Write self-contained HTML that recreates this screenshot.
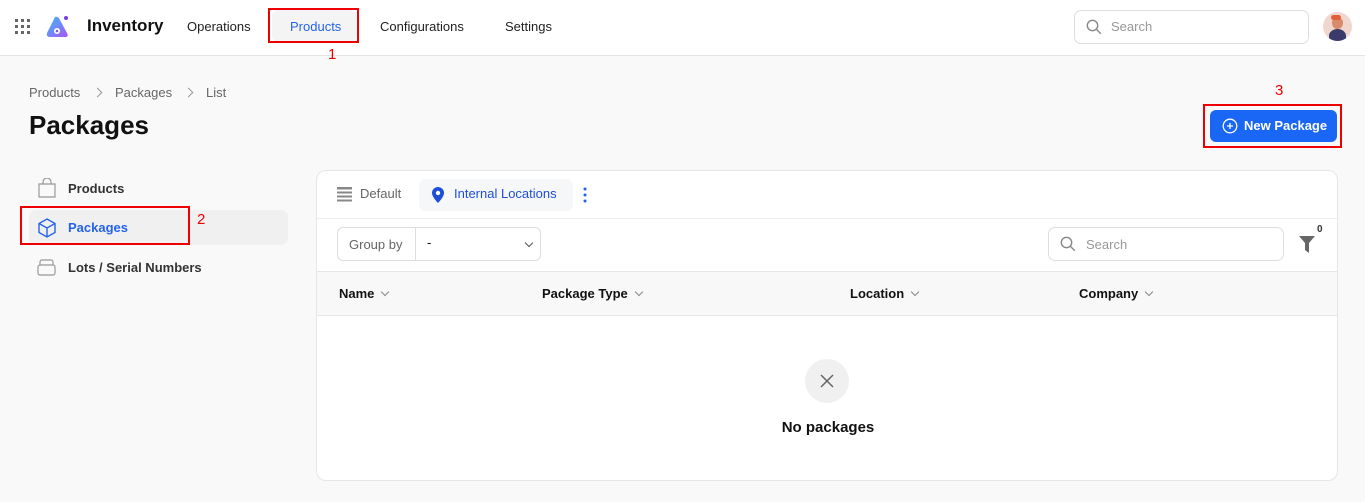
<!DOCTYPE html>
<html><head><meta charset="utf-8"><style>
*{box-sizing:border-box;margin:0;padding:0}
body{width:1365px;height:502px;overflow:hidden;background:#f9f9f9;font-family:"Liberation Sans",sans-serif;color:#111;position:relative}
.abs{position:absolute}
.hdr{left:0;top:0;width:1365px;height:56px;background:#fff;border-bottom:1px solid #e4e4e4}
.nav{font-size:13px;color:#222;top:19px}
.red{border:2px solid #e00;position:absolute}
.rn{color:#e00;font-size:15px;position:absolute}
.card{left:316px;top:170px;width:1022px;height:311px;background:#fff;border:1px solid #e6e6e6;border-radius:10px;overflow:hidden}
.th{font-size:13px;font-weight:bold;top:115px}
.chev{display:inline-block;width:6px;height:6px;border-right:1.2px solid #888;border-bottom:1.2px solid #888;transform:rotate(45deg);margin-left:8px;position:relative;top:-3px}
.bc{top:85px;font-size:13px;color:#666}
.bch{position:absolute;width:7px;height:7px;border-right:1.3px solid #999;border-top:1.3px solid #999;transform:rotate(45deg)}
</style></head><body>
<div class="abs hdr"></div>
<svg class="abs" style="left:15px;top:19px" width="16" height="16"><g fill="#666"><rect x="0" y="0" width="3" height="3"/><rect x="6" y="0" width="3" height="3"/><rect x="12" y="0" width="3" height="3"/><rect x="0" y="6" width="3" height="3"/><rect x="6" y="6" width="3" height="3"/><rect x="12" y="6" width="3" height="3"/><rect x="0" y="12" width="3" height="3"/><rect x="6" y="12" width="3" height="3"/><rect x="12" y="12" width="3" height="3"/></g></svg>
<svg class="abs" style="left:45px;top:14px" width="26" height="26" viewBox="0 0 26 26"><defs><linearGradient id="g" x1="0" y1="0" x2="1" y2="1"><stop offset="0" stop-color="#38bdf8"/><stop offset="1" stop-color="#a855f7"/></linearGradient></defs><path d="M10 3 L2 19 Q1 23 5 23 L20 23 Q24 23 22 19 L15 6 Q13 2 10 3Z" fill="url(#g)"/><circle cx="12" cy="17" r="3" fill="#fff"/><circle cx="12" cy="17" r="1.3" fill="#6d5ce7"/><circle cx="21" cy="4" r="2" fill="#7c3aed"/></svg>
<div class="abs" style="left:87px;top:16px;font-size:17px;font-weight:bold">Inventory</div>
<div class="abs nav" style="left:187px">Operations</div>
<div class="abs" style="left:272px;top:10px;width:84px;height:32px;background:#f4f4f4;border-radius:6px"></div>
<div class="abs nav" style="left:290px;color:#2563eb">Products</div>
<div class="red" style="left:268px;top:8px;width:91px;height:35px"></div>
<div class="rn" style="left:328px;top:46px">1</div>
<div class="abs nav" style="left:380px">Configurations</div>
<div class="abs nav" style="left:505px">Settings</div>
<div class="abs" style="left:1074px;top:10px;width:235px;height:34px;border:1px solid #ddd;border-radius:7px;background:#fff"></div>
<svg class="abs" style="left:1086px;top:19px" width="16" height="16" fill="none" stroke="#888" stroke-width="1.4"><circle cx="6.5" cy="6.5" r="5.2"/><path d="M10.3 10.3l4.5 4.5"/></svg>
<div class="abs" style="left:1111px;top:19px;font-size:13px;color:#999">Search</div>
<div class="abs" style="left:1323px;top:12px;width:29px;height:29px;border-radius:50%;background:#f0d6cc;overflow:hidden"><div class="abs" style="left:6px;top:17px;width:17px;height:14px;border-radius:50% 50% 0 0;background:#3b3b6b"></div><div class="abs" style="left:9px;top:5px;width:11px;height:12px;border-radius:50%;background:#d88a6a"></div><div class="abs" style="left:8px;top:3px;width:10px;height:5px;border-radius:5px;background:#e0603a"></div></div>

<div class="abs bc" style="left:29px">Products</div>
<span class="bch" style="left:94px;top:89px"></span>
<div class="abs bc" style="left:115px">Packages</div>
<span class="bch" style="left:185px;top:89px"></span>
<div class="abs bc" style="left:206px">List</div>
<div class="abs" style="left:29px;top:110px;font-size:26px;font-weight:bold">Packages</div>
<div class="rn" style="left:1275px;top:82px">3</div>
<div class="red" style="left:1203px;top:104px;width:139px;height:44px"></div>
<div class="abs" style="left:1210px;top:110px;width:127px;height:32px;background:#1a66f5;border-radius:6px;color:#fff;font-size:13px;font-weight:bold;padding:8px 0 0 34px">New Package</div>
<svg class="abs" style="left:1222px;top:118px" width="16" height="16" fill="none" stroke="#fff" stroke-width="1.3"><circle cx="8" cy="8" r="6.8"/><path d="M8 5v6M5 8h6"/></svg>

<svg class="abs" style="left:38px;top:178px" width="18" height="20" fill="none" stroke="#999" stroke-width="1.2"><path d="M1 6h16v13H1z"/><path d="M5 6V4a4 4 0 0 1 8 0v2"/></svg>
<div class="abs" style="left:68px;top:181px;font-size:13px;font-weight:bold;color:#333">Products</div>
<div class="abs" style="left:29px;top:210px;width:259px;height:35px;background:#f0f0f0;border-radius:7px"></div>
<svg class="abs" style="left:37px;top:218px" width="20" height="20" fill="none" stroke="#2563eb" stroke-width="1.4"><path d="M10 1l8 4.5v9L10 19l-8-4.5v-9z"/><path d="M2 5.5l8 4.5 8-4.5M10 10v9"/></svg>
<div class="abs" style="left:68px;top:220px;font-size:13px;font-weight:bold;color:#2563eb">Packages</div>
<div class="red" style="left:20px;top:206px;width:170px;height:39px"></div>
<div class="rn" style="left:197px;top:211px">2</div>
<svg class="abs" style="left:37px;top:259px" width="19" height="17" fill="none" stroke="#999" stroke-width="1.2"><rect x="1" y="6" width="17" height="10" rx="2"/><path d="M3 6V3a2 2 0 0 1 2-2h9a2 2 0 0 1 2 2v3"/></svg>
<div class="abs" style="left:68px;top:260px;font-size:13px;font-weight:bold;color:#333">Lots / Serial Numbers</div>

<div class="abs card">
 <svg class="abs" style="left:20px;top:16px" width="15" height="15" fill="#888"><rect y="0" width="15" height="2.5"/><rect y="4.5" width="15" height="2"/><rect y="8.5" width="15" height="2"/><rect y="12.5" width="15" height="2"/></svg>
 <div class="abs" style="left:43px;top:15px;font-size:13px;color:#666">Default</div>
 <div class="abs" style="left:102px;top:8px;width:154px;height:32px;background:#f6f7f9;border-radius:7px"></div>
 <svg class="abs" style="left:114px;top:15px" width="14" height="18"><path d="M7 1a6 6 0 0 1 6 6c0 4-6 10-6 10S1 11 1 7a6 6 0 0 1 6-6z" fill="#1d4ed8"/><circle cx="7" cy="7" r="2.2" fill="#fff"/></svg>
 <div class="abs" style="left:137px;top:15px;font-size:13px;color:#1d4ed8">Internal Locations</div>
 <svg class="abs" style="left:266px;top:16px" width="4" height="16" fill="#2563eb"><circle cx="2" cy="2" r="1.5"/><circle cx="2" cy="8" r="1.5"/><circle cx="2" cy="14" r="1.5"/></svg>
 <div class="abs" style="left:0;top:47px;width:1022px;height:1px;background:#ececec"></div>
 <div class="abs" style="left:20px;top:56px;width:204px;height:34px;border:1px solid #ddd;border-radius:6px"></div>
 <div class="abs" style="left:98px;top:56px;width:1px;height:34px;background:#ddd"></div>
 <div class="abs" style="left:32px;top:66px;font-size:13px;color:#666">Group by</div>
 <div class="abs" style="left:110px;top:64px;font-size:13px">-</div>
 <div class="abs" style="left:201px;top:65px"><span class="chev" style="border-color:#555"></span></div>
 <div class="abs" style="left:731px;top:56px;width:236px;height:34px;border:1px solid #ddd;border-radius:7px"></div>
 <svg class="abs" style="left:743px;top:65px" width="16" height="16" fill="none" stroke="#888" stroke-width="1.4"><circle cx="6.5" cy="6.5" r="5.2"/><path d="M10.3 10.3l4.5 4.5"/></svg>
 <div class="abs" style="left:769px;top:66px;font-size:13px;color:#999">Search</div>
 <svg class="abs" style="left:982px;top:65px" width="16" height="17"><path d="M0 0h16L10 7v10L6 14V7z" fill="#666"/></svg>
 <div class="abs" style="left:1000px;top:53px;font-size:10px;font-weight:bold;color:#333">0</div>
 <div class="abs" style="left:0;top:100px;width:1022px;height:45px;background:#f8f8f8;border-top:1px solid #e6e6e6;border-bottom:1px solid #e6e6e6"></div>
 <div class="abs th" style="left:22px">Name<span class="chev"></span></div>
 <div class="abs th" style="left:225px">Package Type<span class="chev"></span></div>
 <div class="abs th" style="left:533px">Location<span class="chev"></span></div>
 <div class="abs th" style="left:762px">Company<span class="chev"></span></div>
 <div class="abs" style="left:488px;top:188px;width:44px;height:44px;border-radius:50%;background:#f0f0f0"></div>
 <svg class="abs" style="left:503px;top:203px" width="14" height="14" stroke="#666" stroke-width="1.5"><path d="M1 1l12 12M13 1L1 13"/></svg>
 <div class="abs" style="left:0;top:248px;width:1022px;text-align:center;font-size:15px;font-weight:bold">No packages</div>
</div>
</body></html>
